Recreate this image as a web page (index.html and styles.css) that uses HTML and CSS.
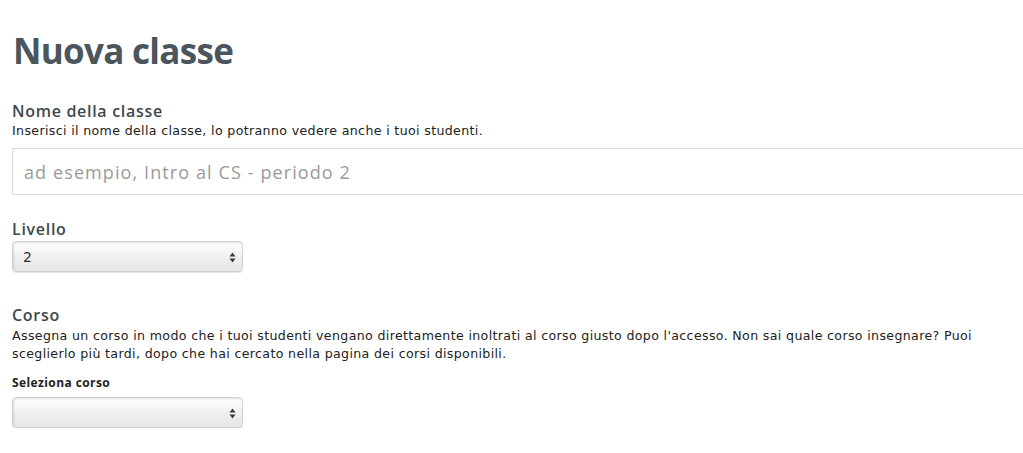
FILE: index.html
```html
<!DOCTYPE html>
<html lang="it">
<head>
<meta charset="utf-8">
<title>Nuova classe</title>
<link rel="stylesheet" href="styles.css">
</head>
<body>
<main class="page">
  <h1 class="title">Nuova classe</h1>

  <section class="field field-name">
    <h2 class="label">Nome della classe</h2>
    <p class="help">Inserisci il nome della classe, lo potranno vedere anche i tuoi studenti.</p>
    <input class="text-input" type="text" placeholder="ad esempio, Intro al CS - periodo 2">
  </section>

  <section class="field field-level">
    <h2 class="label">Livello</h2>
    <div class="select">
      <span class="select-value">2</span>
      <svg class="select-arrows" width="7" height="11" viewBox="0 0 7 11"><path d="M3.5 0.5L6.5 4.5H0.5Z M3.5 10.5L0.5 6.5H6.5Z" fill="#3a3a3a"/></svg>
    </div>
  </section>

  <section class="field field-course">
    <h2 class="label">Corso</h2>
    <p class="help help-long">Assegna un corso in modo che i tuoi studenti vengano direttamente inoltrati al corso giusto dopo l'accesso. Non sai quale corso insegnare? Puoi sceglierlo più tardi, dopo che hai cercato nella pagina dei corsi disponibili.</p>
    <h3 class="sublabel">Seleziona corso</h3>
    <div class="select">
      <span class="select-value"></span>
      <svg class="select-arrows" width="7" height="11" viewBox="0 0 7 11"><path d="M3.5 0.5L6.5 4.5H0.5Z M3.5 10.5L0.5 6.5H6.5Z" fill="#3a3a3a"/></svg>
    </div>
  </section>
</main>
</body>
</html>
```

FILE: styles.css
```css
* { box-sizing: border-box; }
html, body { margin: 0; padding: 0; background: #fff; }
body {
  font-family: "DejaVu Sans", "Open Sans", sans-serif;
  color: #333;
  overflow: hidden;
}
.page {
  padding: 26px 0 0 12px;
  width: 1040px;
}
.title {
  margin: 0 0 0 1px;
  font-family: "Open Sans", "Liberation Sans", sans-serif;
  font-size: 35px;
  line-height: 50px;
  font-weight: 700;
  color: #4b555d;
  letter-spacing: -0.7px;
}
.field { margin: 0; }
.field-name { margin-top: 25px; }
.label {
  margin: 0;
  font-size: 16px;
  line-height: 20px;
  font-weight: 600;
  color: #3d4850;
  font-family: "Open Sans", sans-serif;
  letter-spacing: 0.7px;
}
.help {
  margin: 1px 0 0 0;
  font-size: 12.6px;
  line-height: 18px;
  color: #222;
  letter-spacing: 0.35px;
}
.help-long { width: 1000px; margin-top: 2px; }
.text-input {
  display: block;
  margin-top: 8px;
  width: 1030px;
  height: 47px;
  border: 1px solid #dcdcdc;
  padding: 0 11px;
  font-family: "Open Sans", sans-serif;
  letter-spacing: 1.1px;
  font-size: 18px;
  color: #333;
  outline: none;
}
.text-input::placeholder { color: #9a9a9a; }
.field-level { margin-top: 24px; }
.field-level .label { margin-bottom: 2px; }
.select {
  position: relative;
  display: flex;
  align-items: center;
  width: 231px;
  height: 31px;
  padding: 0 10px;
  border-radius: 4px;
  border: 1px solid #d2d2d2;
  background: linear-gradient(#ffffff 0%, #f0f0f0 50%, #e6e6e6 100%);
  box-shadow: inset 1px 1px 2px rgba(0,0,0,0.12), 0 1px 1px rgba(0,0,0,0.1);
  font-size: 14px;
  color: #333;
}
.select-arrows {
  position: absolute;
  right: 6px;
  top: 10px;
}
.field-course { margin-top: 33px; }
.sublabel {
  margin: 11px 0 5px 0;
  font-size: 12px;
  line-height: 18px;
  font-weight: 700;
  color: #222;
  font-family: "Open Sans", sans-serif;
  letter-spacing: 0.4px;
}
```
